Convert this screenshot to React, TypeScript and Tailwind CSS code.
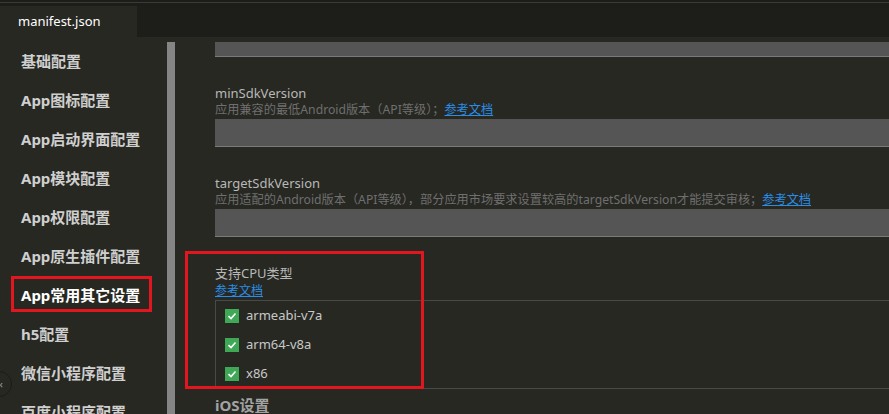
import React from 'react';

const font = { fontFamily: '"Noto Sans", "Noto Sans CJK SC", sans-serif' };

const menu = [
  '基础配置',
  'App图标配置',
  'App启动界面配置',
  'App模块配置',
  'App权限配置',
  'App原生插件配置',
  'App常用其它设置',
  'h5配置',
  '微信小程序配置',
  '百度小程序配置',
];

const Check = () => (
  <span className="w-[14px] h-[14px] bg-[#3fa857] flex items-center justify-center">
    <svg width="10" height="10" viewBox="0 0 10 10">
      <path d="M1.5 5.2 L4 7.5 L8.5 2.5" fill="none" stroke="#fff" strokeWidth="1.6" />
    </svg>
  </span>
);

const Link = () => <span className="text-[#2b8ee6] underline">参考文档</span>;

export default function App() {
  return (
    <div className="w-[889px] h-[414px] overflow-hidden bg-[#272822] relative" style={font}>
      {/* top strip */}
      <div className="h-[6px] bg-[#1c1d19] border-t-[2px] border-t-[#1c1d19]">
        <div className="h-px bg-[#3a3b36]" />
      </div>
      {/* tab bar */}
      <div className="h-[31px] flex bg-[#1d1e1a]">
        <div className="w-[137px] bg-[#272822] flex items-center pl-[18px] text-[13px] text-white">manifest.json</div>
      </div>

      <div className="flex">
        {/* sidebar */}
        <div className="w-[167px] shrink-0 pt-[5px] relative">
          {menu.map((m, i) => (
            <div
              key={m}
              className={
                'h-[39px] flex items-center pl-[21px] text-[15px] font-bold ' +
                (i === 6 ? 'text-white' : 'text-[#cfcfcf]')
              }
            >
              {m}
            </div>
          ))}
          <div className="absolute left-[11px] top-[239px] w-[141px] h-[36px] border-[3px] border-[#e3161f]" />
          <div className="absolute left-[-14px] top-[334px] w-[26px] h-[26px] rounded-full border border-[#1b1c18] flex items-center justify-end pr-[8px] text-[11px] text-[#9a9a9a]">
            ‹
          </div>
        </div>

        {/* scrollbar */}
        <div className="w-[8px] shrink-0 mt-[5px] h-[400px] bg-[#858585]" />

        {/* main */}
        <div className="flex-1 pl-[40px] relative">
          <div className="mt-[5px] h-[15px] bg-[#555555] border-b border-[#7a7a7a]" />

          <div className="mt-[27px] h-[18px] leading-[18px] text-[13px] text-[#b8b8b8]">minSdkVersion</div>
          <div className="h-[16px] leading-[16px] text-[12.2px] text-[#6f6f6f]">
            应用兼容的最低Android版本（API等级）；<Link />
          </div>
          <div className="mt-px h-[28px] bg-[#555555] border-b border-[#7a7a7a]" />

          <div className="mt-[27px] h-[18px] leading-[18px] text-[13px] text-[#b8b8b8]">targetSdkVersion</div>
          <div className="h-[16px] leading-[16px] text-[12.2px] text-[#6f6f6f] whitespace-nowrap">
            应用适配的Android版本（API等级），部分应用市场要求设置较高的targetSdkVersion才能提交审核；<Link />
          </div>
          <div className="mt-px h-[28px] bg-[#555555] border-b border-[#7a7a7a]" />

          <div className="mt-[27px] h-[18px] leading-[18px] text-[13px] text-[#b8b8b8]">支持CPU类型</div>
          <div className="h-[18px] leading-[18px] text-[12px]">
            <Link />
          </div>
          <div className="border-l border-y border-[#4a4a45] pl-[9px]">
            {['armeabi-v7a', 'arm64-v8a', 'x86'].map((c) => (
              <div key={c} className="h-[29px] flex items-center gap-[7px] text-[13px] text-[#c8c8c8]">
                <Check />
                {c}
              </div>
            ))}
          </div>

          <div className="mt-[7px] text-[15px] font-bold text-[#a3a3a3] leading-[18px]">iOS设置</div>

          <div className="absolute left-[10px] top-[214px] w-[239px] h-[138px] border-[3px] border-[#e3161f]" />
        </div>
      </div>
    </div>
  );
}
